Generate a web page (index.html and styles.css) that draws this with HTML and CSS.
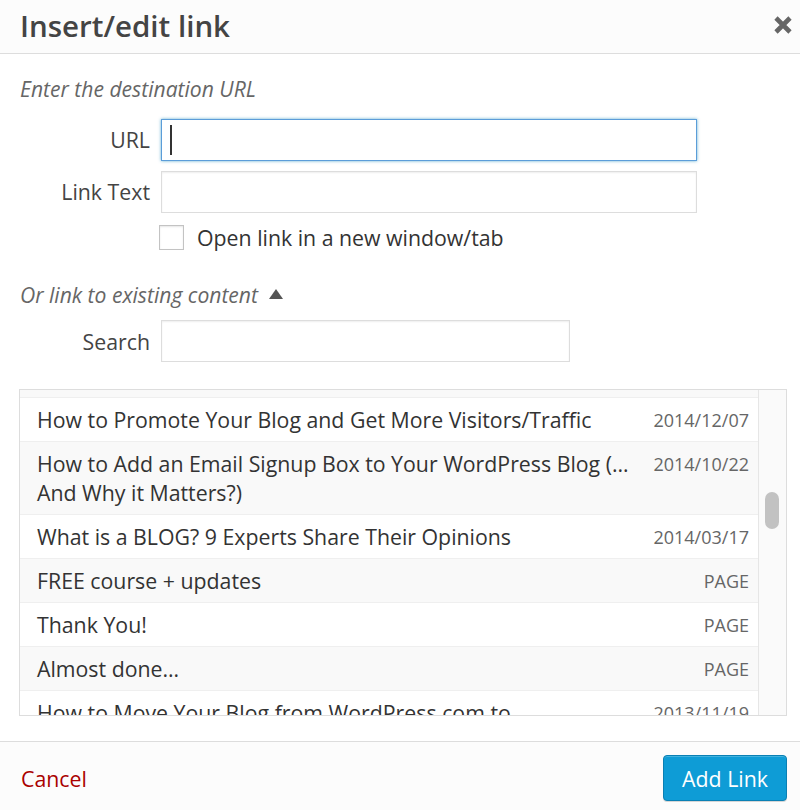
FILE: index.html
```html
<!DOCTYPE html>
<html lang="en">
<head>
<meta charset="utf-8">
<title>Insert/edit link</title>
<link rel="stylesheet" href="styles.css">
</head>
<body>
<div class="dialog">
  <header class="head">
    <h1 class="title">Insert/edit link</h1>
    <button class="close" aria-label="Close">
      <svg width="20" height="20" viewBox="0 0 20 20"><path d="M3 3 L17 17 M17 3 L3 17" stroke="#666" stroke-width="4.6" stroke-linecap="butt"/></svg>
    </button>
  </header>
  <main class="body">
    <p class="howto">Enter the destination URL</p>
    <div class="row">
      <label class="lab">URL</label>
      <div class="fieldwrap">
        <input class="field field-url focus" type="text">
        <span class="caret"></span>
      </div>
    </div>
    <div class="row row2">
      <label class="lab">Link Text</label>
      <input class="field field-url" type="text">
    </div>
    <div class="checkrow">
      <input class="check" type="checkbox">
      <span class="checklab">Open link in a new window/tab</span>
    </div>
    <p class="howto toggle">Or link to existing content <span class="tri"></span></p>
    <div class="row row3">
      <label class="lab">Search</label>
      <input class="field field-search" type="text">
    </div>
    <div class="results">
      <ul class="list">
        <li class="item alt stub"></li>
        <li class="item"><span class="t">How to Promote Your Blog and Get More Visitors/Traffic</span><span class="d">2014/12/07</span></li>
        <li class="item alt"><span class="t">How to Add an Email Signup Box to Your WordPress Blog (…<br>And Why it Matters?)</span><span class="d">2014/10/22</span></li>
        <li class="item"><span class="t">What is a BLOG? 9 Experts Share Their Opinions</span><span class="d">2014/03/17</span></li>
        <li class="item alt"><span class="t">FREE course + updates</span><span class="d">PAGE</span></li>
        <li class="item"><span class="t">Thank You!</span><span class="d">PAGE</span></li>
        <li class="item alt"><span class="t">Almost done…</span><span class="d">PAGE</span></li>
        <li class="item"><span class="t">How to Move Your Blog from WordPress.com to</span><span class="d">2013/11/19</span></li>
      </ul>
      <div class="track"><div class="thumb"></div></div>
    </div>
  </main>
  <footer class="foot">
    <a class="cancel" href="#">Cancel</a>
    <button class="primary">Add Link</button>
  </footer>
</div>
</body>
</html>
```
FILE: styles.css
```css
* { box-sizing: border-box; }
html, body { margin: 0; padding: 0; }
body {
  font-family: "Open Sans", "Noto Sans", "Liberation Sans", sans-serif;
  background: #fff;
  color: #333;
  width: 800px;
  height: 810px;
  overflow: hidden;
}
.dialog {
  display: flex;
  flex-direction: column;
  height: 810px;
}
.head {
  height: 54px;
  flex: none;
  background: #fcfcfc;
  border-bottom: 1px solid #dddddd;
  display: flex;
  align-items: center;
  justify-content: space-between;
  padding: 0 7px 0 20px;
}
.title {
  margin: 0 0 2px 0;
  font-size: 29.5px;
  font-weight: 600;
  color: #444;
  line-height: 50px;
}
.close {
  border: 0;
  background: none;
  padding: 0;
  width: 20px;
  height: 20px;
  margin-top: -4px;
  display: flex;
}
.body {
  flex: 1;
  padding: 20px 13px 0 20px;
}
.howto {
  margin: 0;
  font-style: italic;
  font-size: 21.1px;
  line-height: 30px;
  color: #666;
}
.row {
  display: flex;
  align-items: center;
  margin-top: 15px;
  height: 42px;
}
.row2 { margin-top: 10px; }
.row3 { margin-top: 10px; }
.lab {
  width: 130px;
  text-align: right;
  margin-right: 11px;
  margin-top: -2px;
  font-size: 21.3px;
  color: #444;
  flex: none;
}
.row3 .lab { margin-top: 0; }
.fieldwrap {
  position: relative;
  display: flex;
}
.field {
  height: 42px;
  border: 1px solid #dddddd;
  box-shadow: inset 0 1px 2px rgba(0,0,0,.07);
  background: #fff;
  margin: 0;
  padding: 0 8px;
  font: inherit;
  outline: none;
  border-radius: 0;
}
.field-url { width: 536px; }
.field-search { width: 409px; }
.focus {
  border-color: #5b9dd9;
  box-shadow: 0 0 3px rgba(30,140,190,.7);
}
.caret {
  position: absolute;
  left: 9px;
  top: 6px;
  width: 2px;
  height: 30px;
  background: #333;
}
.checkrow {
  display: flex;
  align-items: center;
  margin-top: 12px;
  padding-left: 139px;
  height: 25px;
}
.check {
  appearance: none;
  -webkit-appearance: none;
  width: 25px;
  height: 25px;
  margin: 0 13px 0 0;
  border: 1px solid #c3c3c3;
  background: #fff;
  box-shadow: inset 0 1px 2px rgba(0,0,0,.1);
  border-radius: 0;
}
.checklab {
  font-size: 21.3px;
  color: #333;
}
.toggle {
  margin-top: 30px;
  display: flex;
  align-items: center;
}
.tri {
  display: inline-block;
  width: 0;
  height: 0;
  margin-left: 11px;
  margin-top: -3px;
  border-left: 7px solid transparent;
  border-right: 7px solid transparent;
  border-bottom: 10px solid #555;
}
.results {
  margin-top: 27px;
  margin-left: -1px;
  width: 768px;
  height: 327px;
  border: 1px solid #dddddd;
  display: flex;
  overflow: hidden;
}
.list {
  list-style: none;
  margin: 0;
  padding: 0;
  flex: 1;
  min-width: 0;
}
.item {
  display: flex;
  align-items: flex-start;
  justify-content: space-between;
  padding: 7px 9px 7px 17px;
  border-bottom: 1px solid #efefef;
  background: #fff;
}
.item.alt { background: #f9f9f9; }
.item.stub { height: 8px; padding: 0; }
.t {
  font-size: 21.3px;
  line-height: 29px;
  color: #333;
  white-space: nowrap;
}
.d {
  font-size: 18px;
  line-height: 28px;
  padding-top: 1px;
  color: #666;
  flex: none;
}
.track {
  width: 28px;
  flex: none;
  background: #fafafa;
  border-left: 1px solid #e6e6e6;
  padding: 102px 0 0 6px;
}
.thumb {
  width: 14px;
  height: 37px;
  border-radius: 7px;
  background: #c2c2c2;
}
.foot {
  flex: none;
  height: 69px;
  background: #fcfcfc;
  border-top: 1px solid #dddddd;
  display: flex;
  align-items: center;
  justify-content: space-between;
  padding: 4px 13px 0 21px;
}
.cancel {
  color: #aa0000;
  text-decoration: none;
  font-size: 21.3px;
}
.primary {
  height: 46px;
  width: 124px;
  border: 1px solid #0a80b4;
  border-radius: 4px;
  background: #0e9cd6;
  color: #fff;
  font: inherit;
  font-size: 21.3px;
  padding: 0;
  box-shadow: inset 0 1px 0 rgba(120,200,230,.5), 0 1px 0 rgba(0,0,0,.15);
}
```
